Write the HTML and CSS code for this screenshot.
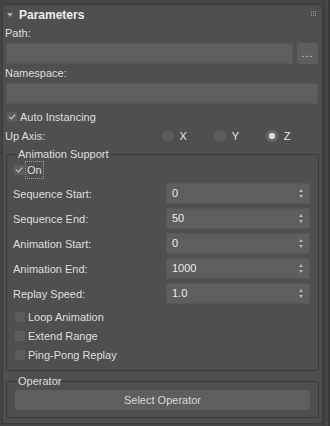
FILE: index.html
```html
<!DOCTYPE html>
<html lang="en">
<head>
    <meta charset="UTF-8">
    <title>Parameters</title>
    <link rel="stylesheet" href="styles.css">
</head>
<body>
    <div class="frame">
        <div class="panel">
            <div class="rollout-head">
                <span class="arrow"></span>
                <span class="rollout-title">Parameters</span>
                <span class="grip"><i></i><i></i><i></i><i></i><i></i><i></i><i></i><i></i><i></i></span>
            </div>

            <div class="label first">Path:</div>
            <div class="path-row">
                <div class="field"></div>
                <div class="browse">...</div>
            </div>

            <div class="label">Namespace:</div>
            <div class="field"></div>

            <label class="check top-check"><span class="box checked"></span>Auto Instancing</label>

            <div class="axis-row">
                <span class="axis-label">Up Axis:</span>
                <span class="radio"><span class="dot"></span>X</span>
                <span class="radio"><span class="dot"></span>Y</span>
                <span class="radio"><span class="dot on"></span>Z</span>
            </div>

            <fieldset class="group anim">
                <legend>Animation Support</legend>
                <label class="check on-check"><span class="box checked"></span><span class="focus">On</span></label>

                <div class="spin-row"><span>Sequence Start:</span><div class="spinner">0<b class="arrows"></b></div></div>
                <div class="spin-row"><span>Sequence End:</span><div class="spinner">50<b class="arrows"></b></div></div>
                <div class="spin-row"><span>Animation Start:</span><div class="spinner">0<b class="arrows"></b></div></div>
                <div class="spin-row"><span>Animation End:</span><div class="spinner">1000<b class="arrows"></b></div></div>
                <div class="spin-row"><span>Replay Speed:</span><div class="spinner">1.0<b class="arrows"></b></div></div>

                <label class="check opt"><span class="box"></span>Loop Animation</label>
                <label class="check opt"><span class="box"></span>Extend Range</label>
                <label class="check opt"><span class="box"></span>Ping-Pong Replay</label>
            </fieldset>

            <fieldset class="group oper">
                <legend>Operator</legend>
                <div class="button">Select Operator</div>
            </fieldset>
        </div>
        <div class="scroll"></div>
    </div>
</body>
</html>
```

FILE: styles.css
```css
* {
    margin: 0;
    padding: 0;
    box-sizing: border-box;
}

body {
    background: #444444;
    font-family: 'Liberation Sans', Arial, sans-serif;
    font-size: 11px;
    color: #dedede;
    width: 330px;
    height: 426px;
    overflow: hidden;
}

.frame {
    display: flex;
    height: 426px;
    padding: 4px 0 2px 2px;
}

.panel {
    width: 321px;
    flex: none;
    background: #4f4f4f;
    border: 1px solid #3b3b3b;
    border-radius: 3px 3px 0 0;
    padding: 0 4px 0 3px;
    position: relative;
}

.scroll {
    flex: 1;
    margin-top: -4px;
    margin-bottom: -2px;
    margin-left: 1px;
    border-left: 1px solid #3a3a3a;
    border-right: 2px solid #3a3a3a;
    background: #484848;
}

/* rollout header */
.rollout-head {
    height: 20px;
    display: flex;
    align-items: center;
}

.arrow {
    width: 0;
    height: 0;
    border-left: 3px solid transparent;
    border-right: 3px solid transparent;
    border-top: 4px solid #a8a8a8;
    margin: 0 6px 1px 1px;
}

.rollout-title {
    font-weight: bold;
    font-size: 12px;
    color: #ececec;
}

.grip {
    position: absolute;
    right: 6px;
    top: 6px;
    display: grid;
    grid-template-columns: repeat(3, 1px);
    gap: 1px;
}

.grip i {
    width: 1px;
    height: 1px;
    background: #9a9a9a;
}

.label {
    height: 16px;
    line-height: 16px;
    margin: 1px 0 0 -1px;
}

.label.first {
    margin-top: 0;
}

.field {
    flex: 1;
    height: 21px;
    background: #5e5e5e;
    border: 1px solid #575757;
    margin-top: 2px;
}

.path-row {
    display: flex;
    gap: 4px;
}

.browse {
    width: 21px;
    height: 21px;
    margin-top: 2px;
    background: #5e5e5e;
    border-radius: 3px;
    color: #d8d8d8;
    font-size: 11px;
    text-align: center;
    line-height: 20px;
    letter-spacing: 1px;
}

/* checkboxes */
.check {
    display: flex;
    align-items: center;
    height: 16px;
}

.box {
    width: 10px;
    height: 10px;
    background: #5c5c5c;
    margin-right: 3px;
    position: relative;
}

.box.checked::after {
    content: '';
    position: absolute;
    left: 3px;
    top: 1px;
    width: 3px;
    height: 5px;
    border-right: 1.5px solid #cfcfcf;
    border-bottom: 1.5px solid #cfcfcf;
    transform: rotate(40deg);
}

.top-check {
    margin: 5px 0 0 1px;
}

/* radio row */
.axis-row {
    display: flex;
    align-items: center;
    height: 16px;
    margin: 3px 0 0 -1px;
}

.axis-label {
    width: 159px;
}

.radio {
    display: flex;
    align-items: center;
    width: 53px;
    color: #e4e4e4;
}

.dot {
    width: 12px;
    height: 12px;
    border-radius: 50%;
    background: #5b5b5b;
    margin-right: 6px;
    display: flex;
    align-items: center;
    justify-content: center;
}

.dot.on {
    background: #6a6a6a;
}

.dot.on::after {
    content: '';
    width: 6px;
    height: 6px;
    border-radius: 50%;
    background: #dcdcdc;
}

/* group boxes */
.group {
    border: 1px solid #3a3a3a;
    border-radius: 2px;
    width: 313px;
}

.group legend {
    margin-left: 4px;
    padding: 0 1px;
    line-height: 14px;
}

.anim {
    margin-top: 3px;
    padding: 0 8px 6px 6px;
}

.on-check {
    height: 18px;
    margin-left: 1px;
}

.focus {
    border: 1px dotted #9a9a9a;
    padding: 0 1px;
    line-height: 16px;
    margin-left: -2px;
}

.spin-row {
    display: flex;
    align-items: center;
    justify-content: space-between;
    height: 21px;
    margin-top: 4px;
}

.spinner {
    width: 144px;
    height: 21px;
    background: #5e5e5e;
    border: 1px solid #575757;
    padding-left: 5px;
    line-height: 19px;
    color: #ececec;
    position: relative;
}

.arrows {
    position: absolute;
    right: 5px;
    top: 5px;
    width: 5px;
    height: 9px;
}

.arrows::before,
.arrows::after {
    content: '';
    position: absolute;
    left: 0;
    border-left: 2.5px solid transparent;
    border-right: 2.5px solid transparent;
}

.arrows::before {
    top: 0;
    border-bottom: 3px solid #b8b8b8;
}

.arrows::after {
    bottom: 0;
    border-top: 3px solid #b8b8b8;
}

.opt {
    height: 19px;
    margin-left: 2px;
}

.spin-row + .opt {
    margin-top: 3px;
}

.oper {
    margin-top: 3px;
    padding: 0 8px 7px 6px;
}

.button {
    height: 20px;
    margin: 2px 0 0 2px;
    background: #5e5e5e;
    border-radius: 3px;
    text-align: center;
    line-height: 20px;
    color: #d8d8d8;
}
```
